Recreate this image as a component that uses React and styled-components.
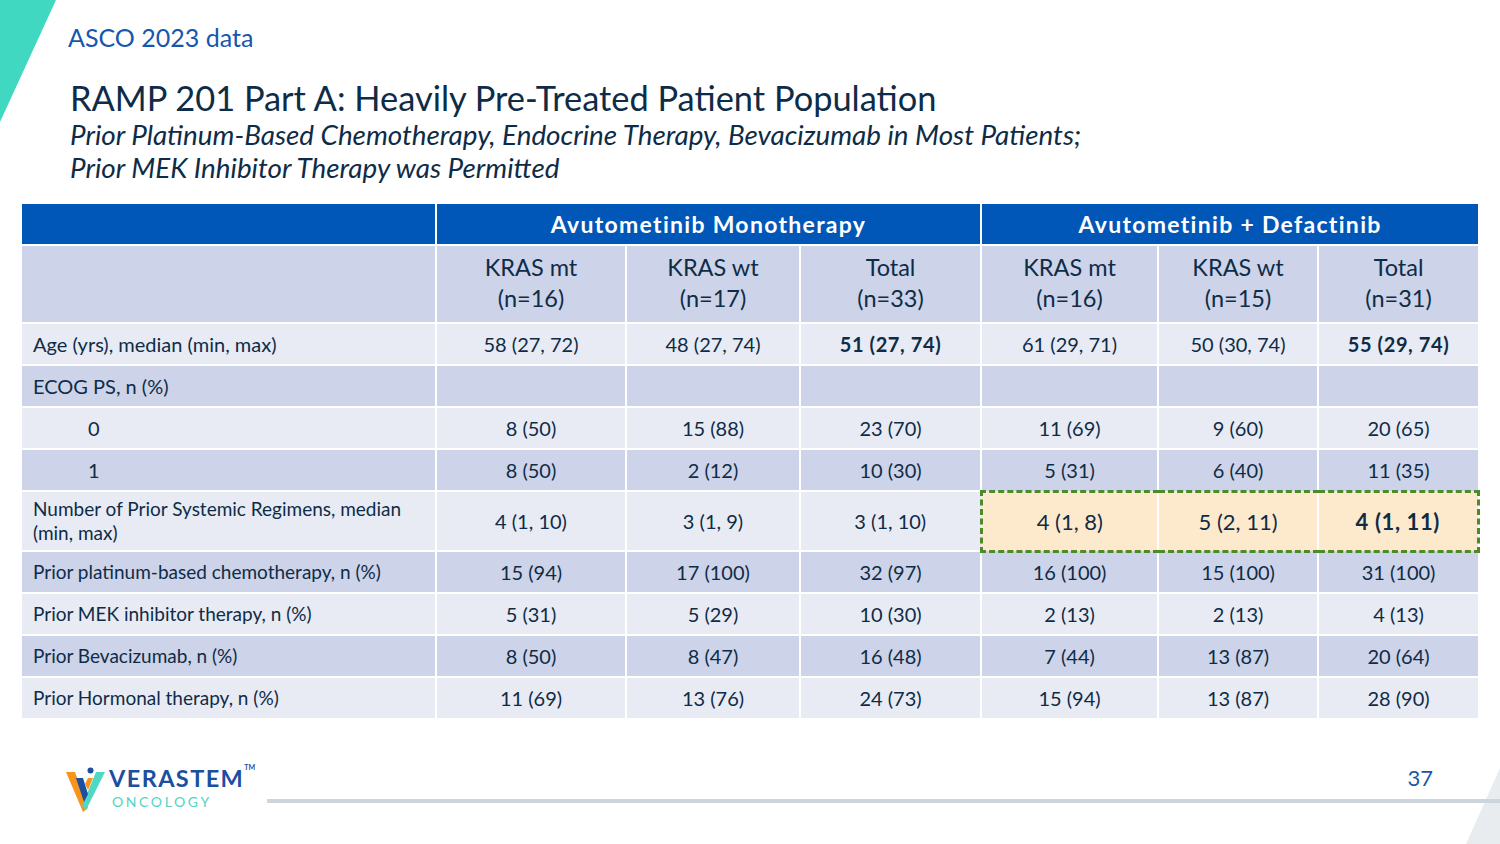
import React from "react";
import styled, { createGlobalStyle, css } from "styled-components";

const GlobalStyle = createGlobalStyle`
  html, body {
    margin: 0;
    padding: 0;
    background: #fff;
  }
  body {
    font-family: Lato, "Open Sans", sans-serif;
  }
`;

const Page = styled.div`
  position: relative;
  width: 1500px;
  height: 844px;
  overflow: hidden;
  background: #fff;
`;

const CornerTop = styled.div`
  position: absolute;
  left: 0;
  top: 0;
  width: 56px;
  height: 122px;
  background: #40d8c1;
  clip-path: polygon(0 0, 100% 0, 0 100%);
`;

const CornerBottom = styled.div`
  position: absolute;
  right: 0;
  bottom: 0;
  width: 34px;
  height: 76px;
  background: rgba(205, 213, 218, 0.45);
  clip-path: polygon(100% 0, 100% 100%, 0 100%);
`;

const Header = styled.header`
  padding: 20px 0 0 68px;
  color: #0e2c47;
`;

const Kicker = styled.div`
  font-size: 25px;
  line-height: 34px;
  color: #1656ad;
`;

const Title = styled.h1`
  margin: 24px 0 0 2px;
  font-size: 34.4px;
  line-height: 40px;
  font-weight: 400;
`;

const Subtitle = styled.div`
  margin-left: 2px;
  font-size: 27.8px;
  line-height: 33px;
  font-style: italic;
`;

const TableWrap = styled.div`
  padding: 20px 0 0 22px;
`;

const Table = styled.table`
  border-collapse: collapse;
  table-layout: fixed;
  width: 1456px;
  color: #0e2c47;
  font-size: 20px;
`;

const Row = styled.tr`
  height: ${(p) => p.$h || 42}px;
  background: ${(p) => (p.$dark ? "#cdd3e8" : "#e8ebf4")};
`;

const GroupRow = styled.tr`
  height: 41px;
  background: #0057b8;
`;

const GroupCell = styled.th`
  border: 2px solid #fff;
  border-top: none;
  color: #fff;
  font-size: 23px;
  font-weight: 700;
  text-align: center;
  letter-spacing: 1.3px;
  padding: 0;
  &:first-child {
    border-left: none;
  }
  &:last-child {
    border-right: none;
  }
`;

const HeadCell = styled.th`
  border: 2px solid #fff;
  font-weight: 400;
  font-size: 23.5px;
  line-height: 31px;
  text-align: center;
  padding: 0 0 3px;
  &:first-child {
    border-left: none;
  }
  &:last-child {
    border-right: none;
  }
`;

const Label = styled.td`
  border: 2px solid #fff;
  border-left: none;
  padding: 0 0 0 ${(p) => (p.$indent ? 66 : 11)}px;
  line-height: 24px;
  font-size: ${(p) => (p.$small ? 19 : 20)}px;
`;

const Cell = styled.td`
  border: 2px solid #fff;
  text-align: center;
  padding: 0;
  font-weight: ${(p) => (p.$bold ? 700 : 400)};
  letter-spacing: ${(p) => (p.$bold ? 0.6 : 0)}px;
  &:last-child {
    border-right: none;
  }
  ${(p) =>
    p.$hl &&
    css`
      background: #fde9cc;
      font-size: 22px;
      border-top: 3px dashed #4d8a2a;
      border-bottom: 3px dashed #4d8a2a;
    `}
  ${(p) =>
    p.$hlStart &&
    css`
      border-left: 3px dashed #4d8a2a;
    `}
  ${(p) =>
    p.$hlEnd &&
    css`
      border-right: 3px dashed #4d8a2a !important;
    `}
`;

const Footer = styled.footer`
  display: grid;
  grid-template-columns: 201px 1fr;
  padding: 46px 0 0 66px;
`;

const Logo = styled.div`
  display: flex;
  align-items: flex-start;
  gap: 3px;
  width: 200px;
`;

const LogoWords = styled.div`
  display: flex;
  flex-direction: column;
  margin-top: -2px;
`;

const Brand = styled.div`
  font-size: 23.5px;
  line-height: 29px;
  font-weight: 700;
  letter-spacing: 1.4px;
  color: #1b4fa0;
  white-space: nowrap;
  sup {
    font-size: 7px;
    line-height: 7px;
    vertical-align: top;
    letter-spacing: 0;
  }
`;

const Sub = styled.div`
  margin: 0 0 0 3px;
  font-size: 14px;
  line-height: 17px;
  letter-spacing: 2.6px;
  color: #4fd4c4;
`;

const FootRight = styled.div`
  display: flex;
  flex-direction: column;
`;

const PageNum = styled.div`
  align-self: flex-end;
  margin-right: 67px;
  font-size: 22px;
  line-height: 24px;
  color: #1656ad;
`;

const Rule = styled.div`
  margin-top: 9px;
  height: 4px;
  background: #cdd5da;
`;

const rows = [
  { label: "Age (yrs), median (min, max)", v: ["58 (27, 72)", "48 (27, 74)", "51 (27, 74)", "61 (29, 71)", "50 (30, 74)", "55 (29, 74)"], bold: [2, 5] },
  { label: "ECOG PS, n (%)", v: ["", "", "", "", "", ""], dark: true },
  { label: "0", indent: true, v: ["8 (50)", "15 (88)", "23 (70)", "11 (69)", "9 (60)", "20 (65)"] },
  { label: "1", indent: true, v: ["8 (50)", "2 (12)", "10 (30)", "5 (31)", "6 (40)", "11 (35)"], dark: true },
  { label: "Number of Prior Systemic Regimens, median (min, max)", small: true, h: 60, hl: true, v: ["4 (1, 10)", "3 (1, 9)", "3 (1, 10)", "4 (1, 8)", "5 (2, 11)", "4 (1, 11)"], bold: [5] },
  { label: "Prior platinum-based chemotherapy, n (%)", small: true, v: ["15 (94)", "17 (100)", "32 (97)", "16 (100)", "15 (100)", "31 (100)"], dark: true },
  { label: "Prior MEK inhibitor therapy, n (%)", small: true, v: ["5 (31)", "5 (29)", "10 (30)", "2 (13)", "2 (13)", "4 (13)"] },
  { label: "Prior Bevacizumab, n (%)", small: true, v: ["8 (50)", "8 (47)", "16 (48)", "7 (44)", "13 (87)", "20 (64)"], dark: true },
  { label: "Prior Hormonal therapy, n (%)", small: true, v: ["11 (69)", "13 (76)", "24 (73)", "15 (94)", "13 (87)", "28 (90)"] },
];

const heads = [
  ["KRAS mt", "(n=16)"],
  ["KRAS wt", "(n=17)"],
  ["Total", "(n=33)"],
  ["KRAS mt", "(n=16)"],
  ["KRAS wt", "(n=15)"],
  ["Total", "(n=31)"],
];

const widths = [414, 190, 174, 181, 177, 160, 160];

function VLogo() {
  return (
    <svg width="40" height="46" viewBox="0 0 40 46">
      <polygon points="0,6 9,6 22,42 17,46" fill="#f7941d" />
      <polygon points="39,6 30,6 16,40 20,44" fill="#4fd8c4" />
      <polygon points="10,12 17,12 22,28 18,36" fill="#1b4fa0" />
      <polygon points="22,12 27,12 22,24 19,18" fill="#f7941d" />
      <circle cx="24.5" cy="4.5" r="3" fill="#1b4fa0" />
    </svg>
  );
}

export default function App() {
  return (
    <Page>
      <GlobalStyle />
      <CornerTop />
      <Header>
        <Kicker>ASCO 2023 data</Kicker>
        <Title>RAMP 201 Part A: Heavily Pre-Treated Patient Population</Title>
        <Subtitle>
          Prior Platinum-Based Chemotherapy, Endocrine Therapy, Bevacizumab in Most Patients;
          <br />
          Prior MEK Inhibitor Therapy was Permitted
        </Subtitle>
      </Header>
      <TableWrap>
        <Table>
          <colgroup>
            {widths.map((w, i) => (
              <col key={i} style={{ width: w }} />
            ))}
          </colgroup>
          <thead>
            <GroupRow>
              <GroupCell />
              <GroupCell colSpan={3}>Avutometinib Monotherapy</GroupCell>
              <GroupCell colSpan={3}>Avutometinib + Defactinib</GroupCell>
            </GroupRow>
            <Row $h={78} $dark>
              <HeadCell />
              {heads.map(([a, b], i) => (
                <HeadCell key={i}>
                  {a}
                  <br />
                  {b}
                </HeadCell>
              ))}
            </Row>
          </thead>
          <tbody>
            {rows.map((r, i) => (
              <Row key={i} $dark={r.dark} $h={r.h}>
                <Label $indent={r.indent} $small={r.small}>
                  {r.label}
                </Label>
                {r.v.map((v, j) => (
                  <Cell
                    key={j}
                    $bold={r.bold && r.bold.includes(j)}
                    $hl={r.hl && j >= 3}
                    $hlStart={r.hl && j === 3}
                    $hlEnd={r.hl && j === 5}
                  >
                    {v}
                  </Cell>
                ))}
              </Row>
            ))}
          </tbody>
        </Table>
      </TableWrap>
      <Footer>
        <Logo>
          <VLogo />
          <LogoWords>
            <Brand>
              VERASTEM<sup>TM</sup>
            </Brand>
            <Sub>ONCOLOGY</Sub>
          </LogoWords>
        </Logo>
        <FootRight>
          <PageNum>37</PageNum>
          <Rule />
        </FootRight>
      </Footer>
      <CornerBottom />
    </Page>
  );
}
